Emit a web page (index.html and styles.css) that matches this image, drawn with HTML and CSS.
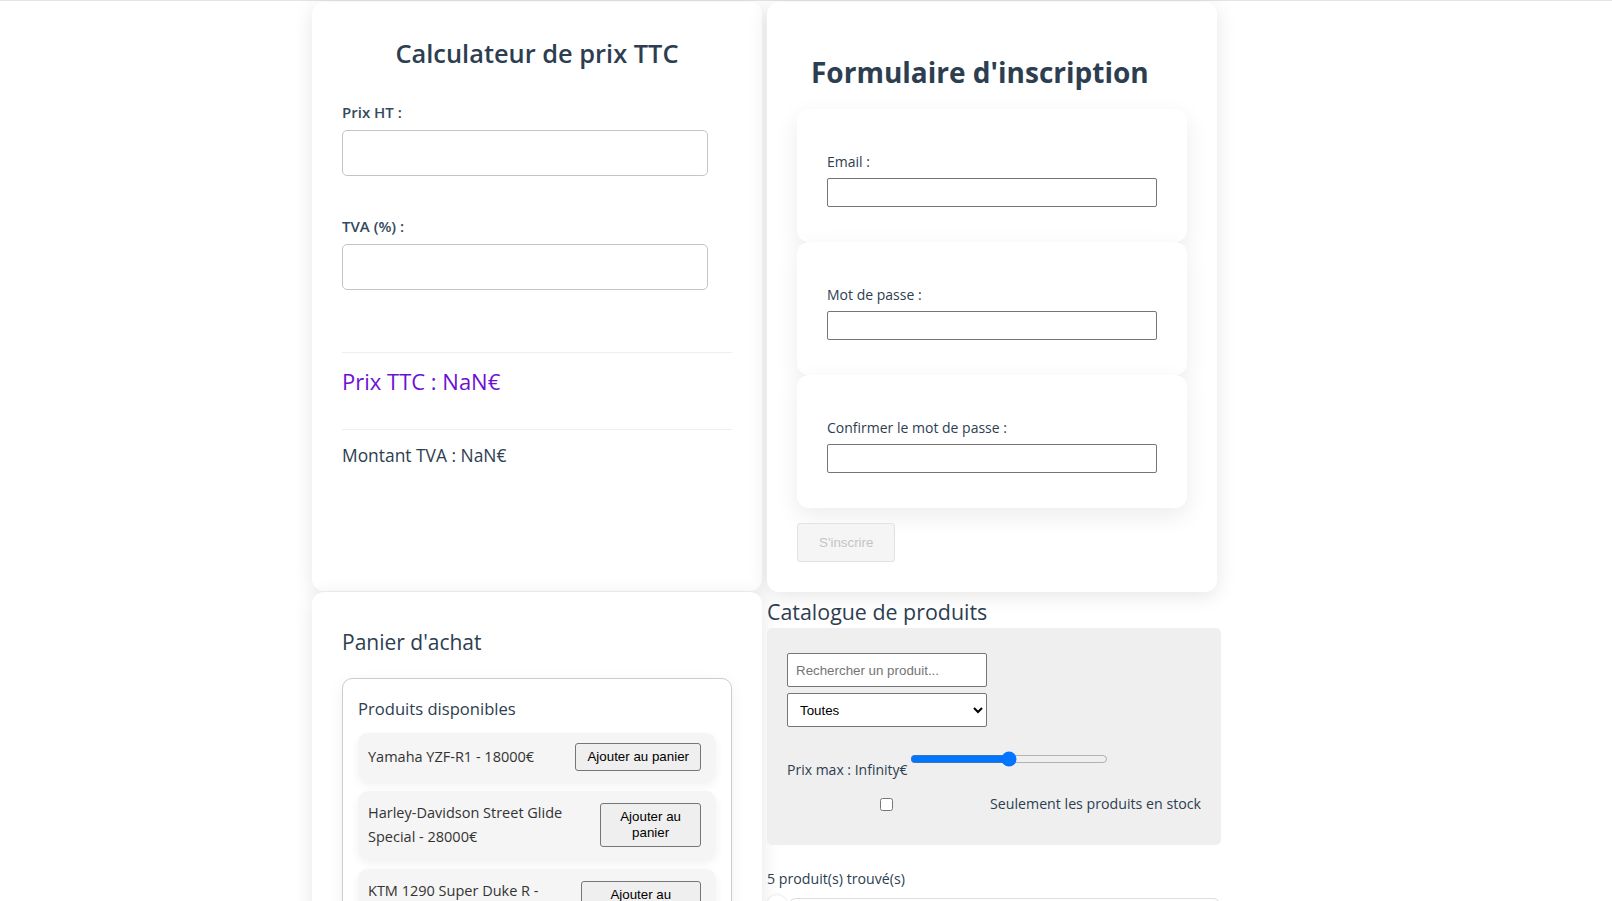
FILE: index.html
```html
<!DOCTYPE html>
<html lang="fr">
<head>
<meta charset="utf-8">
<title>Exercices React</title>
<link rel="stylesheet" href="styles.css">
</head>
<body>
<div class="topline"></div>
<main class="page">
  <section class="card calc">
    <h2 class="calc-title">Calculateur de prix TTC</h2>
    <div class="field">
      <label class="calc-label">Prix HT :</label>
      <input class="calc-input" type="text">
    </div>
    <div class="field">
      <label class="calc-label">TVA (%) :</label>
      <input class="calc-input" type="text">
    </div>
    <div class="result result-ttc">Prix TTC : NaN€</div>
    <div class="result result-tva">Montant TVA : NaN€</div>
  </section>

  <section class="card signup">
    <h1 class="signup-title">Formulaire d'inscription</h1>
    <div class="group">
      <label class="group-label">Email :</label>
      <input class="group-input" type="text">
    </div>
    <div class="group">
      <label class="group-label">Mot de passe :</label>
      <input class="group-input" type="password">
    </div>
    <div class="group">
      <label class="group-label">Confirmer le mot de passe :</label>
      <input class="group-input" type="password">
    </div>
    <button class="submit" disabled>S'inscrire</button>
  </section>

  <section class="card cart">
    <h2 class="cart-title">Panier d'achat</h2>
    <div class="products">
      <h3 class="products-title">Produits disponibles</h3>
      <ul class="product-list">
        <li class="product"><span class="product-name">Yamaha YZF-R1 - 18000€</span><button class="add-btn">Ajouter au panier</button></li>
        <li class="product"><span class="product-name">Harley-Davidson Street Glide Special - 28000€</span><button class="add-btn">Ajouter au panier</button></li>
        <li class="product"><span class="product-name">KTM 1290 Super Duke R - 20000€</span><button class="add-btn">Ajouter au panier</button></li>
      </ul>
    </div>
  </section>

  <section class="catalog">
    <h2 class="catalog-title">Catalogue de produits</h2>
    <div class="filters">
      <input class="search" type="text" placeholder="Rechercher un produit...">
      <select class="category"><option>Toutes</option></select>
      <div class="price-row">
        <label class="price-label">Prix max : Infinity€</label>
        <input class="price-range" type="range" min="0" max="100" value="50">
      </div>
      <label class="stock-row">
        <span class="check-wrap"><input class="stock-check" type="checkbox"></span>
        <span class="stock-text">Seulement les produits en stock</span>
      </label>
    </div>
    <p class="count">5 produit(s) trouvé(s)</p>
    <div class="catalog-item"><span class="remove">✕</span></div>
  </section>
</main>
</body>
</html>
```

FILE: styles.css
```css
html, body {
  margin: 0;
  background: #ffffff;
}

body {
  font-family: "Open Sans", "Noto Sans", sans-serif;
  color: #2c3e50;
  overflow: hidden;
}

.topline {
  height: 1px;
  background: #e3e3e3;
  margin-bottom: 1px;
}

.page {
  width: 988px;
  margin: 0 auto;
  display: grid;
  grid-template-columns: 450px 454px;
  column-gap: 5px;
  align-items: start;
}

.card {
  background: #ffffff;
  border-radius: 12px;
  box-shadow: 0 4px 20px rgba(0, 0, 0, 0.1);
  padding: 30px;
  box-sizing: border-box;
}

/* ---------- Calculateur ---------- */
.calc {
  min-height: 589px;
}

.calc-title {
  margin: 3px 0 30px;
  font-size: 25.4px;
  line-height: 36px;
  font-weight: 600;
  text-align: center;
}

.calc-label {
  display: block;
  font-size: 15px;
  line-height: 22px;
  font-weight: 600;
  color: #34495e;
  margin-bottom: 7px;
}

.calc-input {
  display: block;
  width: 366px;
  height: 46px;
  box-sizing: border-box;
  border: 1px solid #c4c4c4;
  border-radius: 5px;
  padding: 10px;
  font-size: 16px;
}

.field + .field {
  margin-top: 39px;
}

.result {
  border-top: 1px solid #eeeeee;
}

.result-ttc {
  margin-top: 62px;
  padding-top: 12px;
  font-size: 22px;
  line-height: 32px;
  color: #6c10d4;
}

.result-tva {
  margin-top: 32px;
  padding-top: 12px;
  font-size: 17.4px;
  line-height: 26px;
  color: #2c3e50;
}

/* ---------- Inscription ---------- */
.signup {
  width: 450px;
}

.signup-title {
  margin: 20px 0 17px 14px;
  font-size: 28px;
  line-height: 40px;
  font-weight: 700;
}

.group {
  background: #ffffff;
  border-radius: 12px;
  box-shadow: 0 8px 24px rgba(0, 0, 0, 0.08);
  padding: 43px 30px 35px;
}

.group-label {
  display: block;
  font-size: 14px;
  line-height: 20px;
  margin-bottom: 6px;
}

.group-input {
  display: block;
  width: 100%;
  height: 29px;
  box-sizing: border-box;
  border: 1px solid #767676;
  border-radius: 2px;
}

.submit {
  display: block;
  margin-top: 15px;
  height: 39px;
  padding: 0 21px;
  font-family: "Liberation Sans", Arial, sans-serif;
  font-size: 13.33px;
  background: #f5f5f5;
  border: 1px solid #e2e2e2;
  border-radius: 3px;
  color: #c4c4c4;
}

/* ---------- Panier ---------- */
.cart-title {
  margin: 4px 0 20px;
  font-size: 21px;
  line-height: 32px;
  font-weight: 400;
}

.products {
  border: 1px solid #cccccc;
  border-radius: 10px;
  padding: 15px;
  box-shadow: 0 4px 16px rgba(0, 0, 0, 0.06);
}

.products-title {
  margin: 2px 0 11px;
  font-size: 16.6px;
  line-height: 26px;
  font-weight: 400;
}

.product-list {
  list-style: none;
  margin: 0;
  padding: 0;
  display: flex;
  flex-direction: column;
  gap: 10px;
}

.product {
  display: flex;
  justify-content: space-between;
  align-items: center;
  background: #f5f5f5;
  border-radius: 10px;
  padding: 10px 15px 10px 10px;
  box-shadow: 0 4px 10px rgba(0, 0, 0, 0.06);
  font-size: 14.5px;
  line-height: 24px;
  color: #333333;
}

.add-btn {
  font-family: "Liberation Sans", Arial, sans-serif;
  font-size: 13.33px;
  line-height: 16px;
  padding: 5px 11px;
  background: #efefef;
  border: 1px solid #767676;
  border-radius: 3px;
  color: #000000;
}

/* ---------- Catalogue ---------- */
.catalog-title {
  margin: 4px 0 0;
  font-size: 21.4px;
  line-height: 32px;
  font-weight: 400;
}

.filters {
  background: #efefef;
  border-radius: 5px;
  padding: 25px 20px 30px;
}

.search,
.category {
  display: block;
  width: 200px;
  height: 34px;
  box-sizing: border-box;
  border: 1px solid #767676;
  border-radius: 2px;
  background: #ffffff;
  font-family: "Liberation Sans", Arial, sans-serif;
  font-size: 13.33px;
  color: #000000;
}

.search {
  padding: 0 8px;
}

.search::placeholder {
  color: #757575;
}

.category {
  margin-top: 6px;
  padding: 0 8px;
}

.price-row {
  display: flex;
  align-items: flex-start;
  margin-top: 24px;
}

.price-label {
  margin-top: 8px;
  font-size: 14px;
  line-height: 22px;
}

.price-range {
  width: 198px;
  height: 16px;
  margin: 0 0 0 2px;
}

.stock-row {
  display: flex;
  align-items: center;
  margin-top: 12px;
  font-size: 14.2px;
  line-height: 22px;
}

.check-wrap {
  flex: 1;
  display: flex;
  justify-content: center;
}

.stock-check {
  margin: 3px;
}

.stock-text {
  margin-left: 4px;
}

.count {
  margin: 23px 0 0;
  font-size: 14.2px;
  line-height: 22px;
}

.catalog-item {
  position: relative;
  margin: 8px 0 0 21px;
  height: 200px;
  border: 1px solid #dddddd;
  border-radius: 8px;
}

.remove {
  position: absolute;
  left: -22px;
  top: -4px;
  width: 20px;
  height: 20px;
  border-radius: 50%;
  background: #ffffff;
  box-shadow: 0 0 3px rgba(0, 0, 0, 0.15);
  color: #888888;
  font-size: 12px;
  line-height: 20px;
  text-align: center;
}
```
